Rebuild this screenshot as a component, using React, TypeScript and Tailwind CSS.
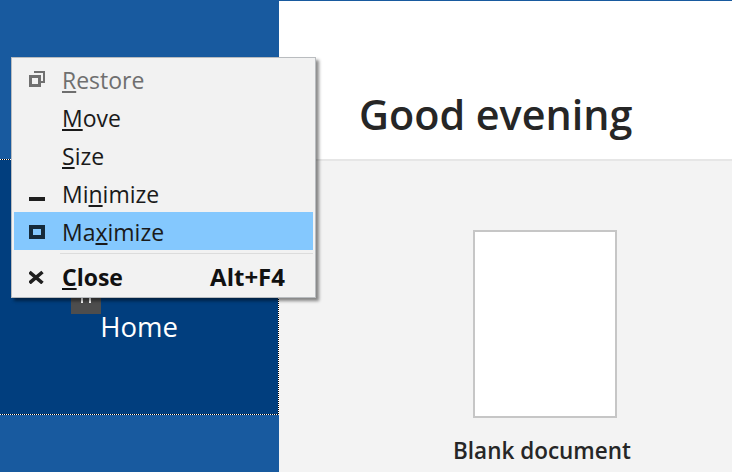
const FONT = "font-['Open_Sans','Noto_Sans',sans-serif]";

function RestoreIcon() {
  return (
    <svg width="16" height="16" viewBox="0 0 16 16" className="text-[#707070]">
      <path d="M5 1h10v10h-3" fill="none" stroke="currentColor" strokeWidth="2" />
      <rect x="1.5" y="5.5" width="9" height="9" fill="none" stroke="currentColor" strokeWidth="3" />
    </svg>
  );
}

function MinimizeIcon() {
  return (
    <svg width="16" height="16" viewBox="0 0 16 16" className="text-[#1f1f1f]">
      <rect x="0" y="12" width="16" height="4" fill="currentColor" />
    </svg>
  );
}

function MaximizeIcon() {
  return (
    <svg width="16" height="16" viewBox="0 0 16 16" className="text-[#152a3a]">
      <rect x="2" y="4" width="12" height="10" fill="none" stroke="currentColor" strokeWidth="4" />
    </svg>
  );
}

function CloseIcon() {
  return (
    <svg width="16" height="16" viewBox="0 0 16 16" className="text-[#1f1f1f]">
      <path d="M0.5 4l13 11M13.5 4l-13 11" fill="none" stroke="currentColor" strokeWidth="3.6" />
    </svg>
  );
}

function MenuRow({
  icon,
  children,
  active,
  muted,
}: {
  icon?: React.ReactNode;
  children: React.ReactNode;
  active?: boolean;
  muted?: boolean;
}) {
  return (
    <div
      className={`flex h-[38px] items-center ${active ? "bg-[#84c8fe]" : ""} ${
        muted ? "text-[#6f6f6f]" : "text-[#1a1a1a]"
      }`}
    >
      <div className="flex w-[48px] pl-[15px]">{icon}</div>
      <span className="pt-[3px] leading-none">{children}</span>
    </div>
  );
}

export default function App() {
  return (
    <div className={`relative flex h-[472px] w-[732px] overflow-hidden bg-[#f3f3f3] ${FONT}`}>
      {/* Sidebar */}
      <aside className="flex w-[279px] flex-col bg-[#185a9f]">
        <div className="h-[159px]" />
        <div className="h-[256px] border-y border-r border-dotted border-white bg-black">
          <div className="flex h-full flex-col items-center bg-[#013e7e] pt-[133px]">
            <div className="ml-[-106px] flex h-[21px] w-[30px] items-start justify-center bg-[#4d4d4d]">
              <div className="h-[10px] w-[10px] border-x-2 border-white" />
            </div>
            <span className="mt-[-4px] text-[27.5px] leading-[34px] text-white">Home</span>
          </div>
        </div>
      </aside>

      {/* Main */}
      <main className="flex flex-1 flex-col">
        <header className="h-[161px] border-t border-b-2 border-t-[#185a9f] border-b-[#e6e6e6] bg-white pl-[80px] pt-[93px]">
          <h1 className="text-[41.3px] font-semibold leading-none text-[#262626]">Good evening</h1>
        </header>
        <section className="ml-[163px] flex w-[200px] flex-1 flex-col items-center pt-[69px]">
          <div className="ml-[6px] h-[188px] w-[144px] shrink-0 border-2 border-[#c6c6c6] bg-white" />
          <span className="mt-[18px] whitespace-nowrap text-[22.5px] font-semibold leading-[30px] text-[#262626]">Blank document</span>
        </section>
      </main>

      {/* System menu */}
      <div className="absolute left-[11px] top-[57px] w-[305px] border border-[#b9bcbf] bg-[#f2f2f2] px-[2px] pt-[2px] text-[23px] shadow-[3px_3px_3px_rgba(0,0,0,0.45)]">
        <MenuRow icon={<RestoreIcon />} muted>
          <u className="underline-offset-2">R</u>estore
        </MenuRow>
        <MenuRow>
          <u className="underline-offset-2">M</u>ove
        </MenuRow>
        <MenuRow>
          <u className="underline-offset-2">S</u>ize
        </MenuRow>
        <MenuRow icon={<MinimizeIcon />}>
          Mi<u className="underline-offset-2">n</u>imize
        </MenuRow>
        <MenuRow icon={<MaximizeIcon />} active>
          Ma<u className="underline-offset-2">x</u>imize
        </MenuRow>
        <div className="ml-[46px] mt-[3px] h-px bg-[#dcdcdc]" />
        <div className="flex h-[43px] items-center pr-[28px] font-bold text-[#111]">
          <div className="flex w-[48px] pl-[15px]">
            <CloseIcon />
          </div>
          <span className="flex-1 pt-[3px] leading-none">
            <u className="underline-offset-2">C</u>lose
          </span>
          <span className="pt-[3px] text-[24px] leading-none">Alt+F4</span>
        </div>
      </div>
    </div>
  );
}
